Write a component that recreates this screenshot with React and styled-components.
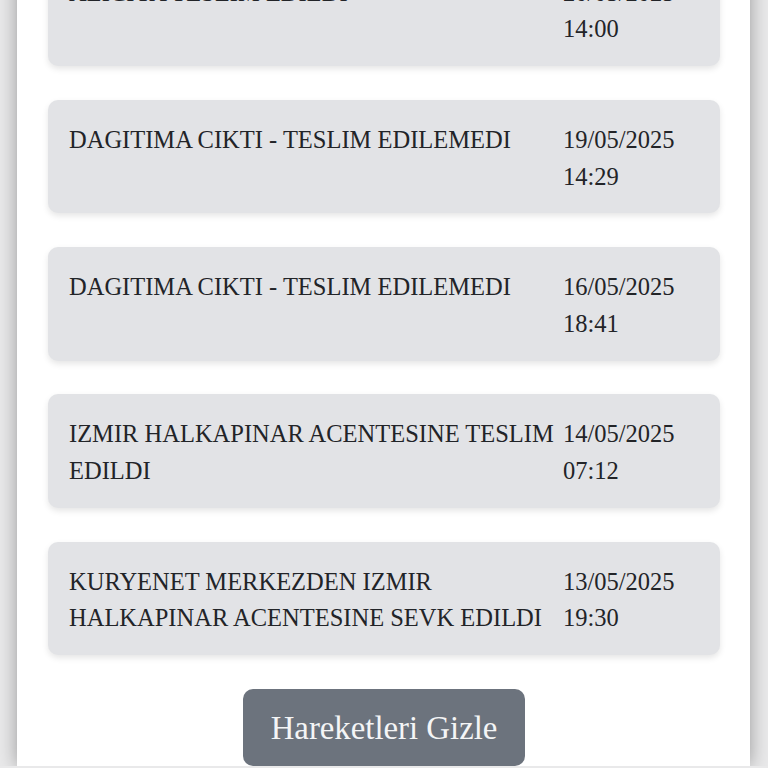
import styled, { createGlobalStyle } from 'styled-components';

const GlobalStyle = createGlobalStyle`
  html, body {
    margin: 0;
    padding: 0;
    background: #e9e9ea;
    overflow: hidden;
  }
  body {
    font-family: "Liberation Serif", "Times New Roman", serif;
  }
`;

const movements = [
  { status: 'ALICIYA TESLIM EDILDI', date: '20/05/2025', time: '14:00' },
  { status: 'DAGITIMA CIKTI - TESLIM EDILEMEDI', date: '19/05/2025', time: '14:29' },
  { status: 'DAGITIMA CIKTI - TESLIM EDILEMEDI', date: '16/05/2025', time: '18:41' },
  { status: 'IZMIR HALKAPINAR ACENTESINE TESLIM EDILDI', date: '14/05/2025', time: '07:12' },
  {
    status: 'KURYENET MERKEZDEN IZMIR HALKAPINAR ACENTESINE SEVK EDILDI',
    date: '13/05/2025',
    time: '19:30',
  },
];

const App = () => {
  return (
    <>
      <GlobalStyle />
      <Panel>
        <List>
          {movements.map((m, i) => (
            <Card key={i}>
              <Status>{m.status}</Status>
              <When>
                <span>{m.date}</span>
                <span>{m.time}</span>
              </When>
            </Card>
          ))}
        </List>
        <Actions>
          <HideButton type="button">Hareketleri Gizle</HideButton>
        </Actions>
      </Panel>
    </>
  );
};

const Panel = styled.div`
  margin: 0 18px 0 17px;
  min-height: 100vh;
  background: #ffffff;
  box-shadow: 0 0 18px rgba(0, 0, 0, 0.35);
  padding: 0 30px 0 31px;
`;

const List = styled.div`
  display: flex;
  flex-direction: column;
  gap: 33.75px;
  margin-top: -47.5px;
`;

const Card = styled.div`
  display: grid;
  grid-template-columns: 1fr 136px;
  padding: 22px 21px 18px;
  background: #e2e3e6;
  border-radius: 10px;
  box-shadow: 0 3px 6px rgba(0, 0, 0, 0.1);
  color: #222428;
  font-size: 24.5px;
  line-height: 1.5;
`;

const Status = styled.div`
  padding-right: 4px;
`;

const When = styled.div`
  display: flex;
  flex-direction: column;
`;

const Actions = styled.div`
  display: flex;
  justify-content: center;
  padding-top: 34px;
`;

const HideButton = styled.button`
  font-family: "Liberation Serif", "Times New Roman", serif;
  font-size: 32.8px;
  line-height: 48px;
  padding: 14.5px 27.5px;
  border: none;
  border-radius: 10px;
  background: #6c737d;
  color: #f4f5f6;
  cursor: pointer;
`;

export default App;
